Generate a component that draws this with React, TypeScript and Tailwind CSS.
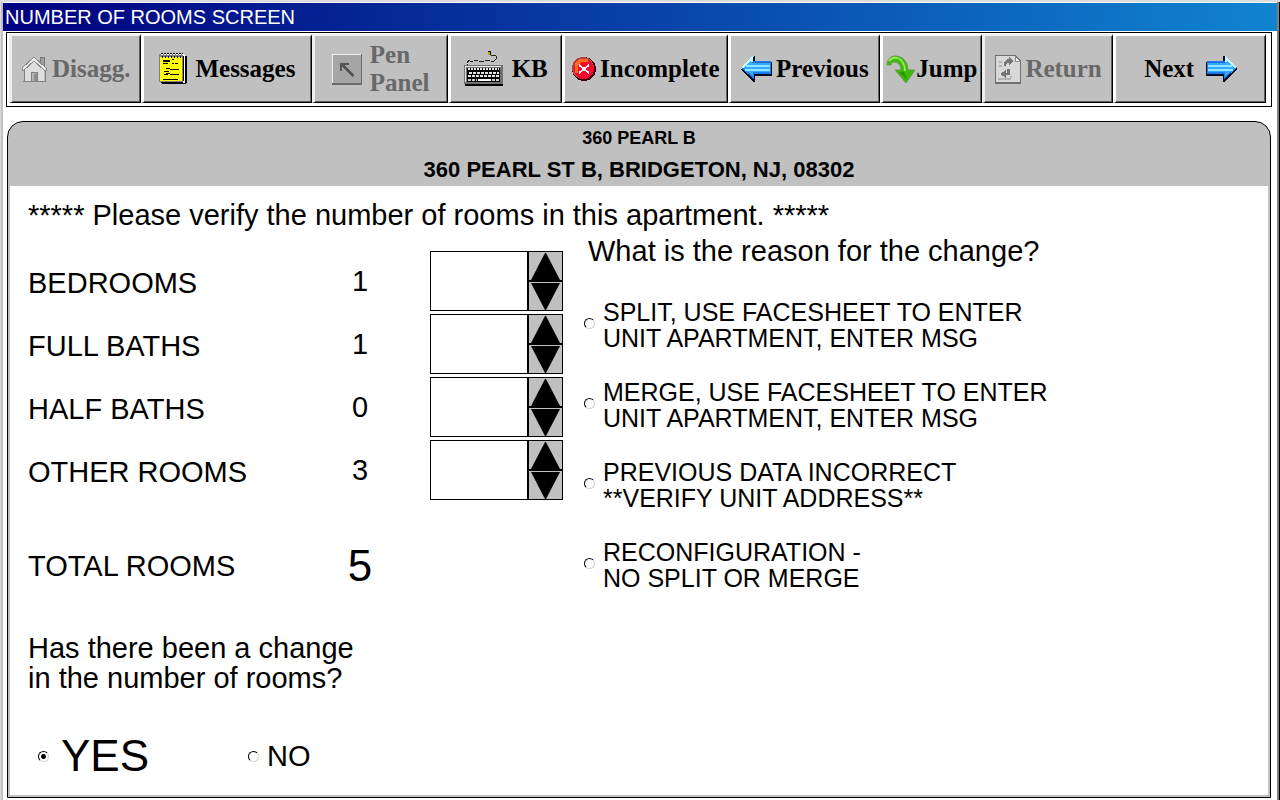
import { useState } from "react";
import type { ReactNode } from "react";

const rooms = [
  { id: "bedrooms", label: "BEDROOMS", count: 1 },
  { id: "full-baths", label: "FULL BATHS", count: 1 },
  { id: "half-baths", label: "HALF BATHS", count: 0 },
  { id: "other-rooms", label: "OTHER ROOMS", count: 3 },
];

const reasons = [
  { id: "split", lines: ["SPLIT, USE FACESHEET TO ENTER", "UNIT APARTMENT, ENTER MSG"] },
  { id: "merge", lines: ["MERGE, USE FACESHEET TO ENTER", "UNIT APARTMENT, ENTER MSG"] },
  { id: "incorrect", lines: ["PREVIOUS DATA INCORRECT", "**VERIFY UNIT ADDRESS**"] },
  { id: "reconfig", lines: ["RECONFIGURATION -", "NO SPLIT OR MERGE"] },
];

const HouseIcon = () => (
  <svg width="26" height="26" viewBox="0 0 26 26" shapeRendering="crispEdges" aria-hidden="true">
    <path d="M18 1h4v10h-4z" fill="#a0a0a0" stroke="#777" />
    <path d="M3 13L12 4l10 9v12H3z" fill="#dedede" />
    <path d="M2 14v11M1 25h23M23 14v11" stroke="#808080" strokeWidth="1" fill="none" />
    <path d="M0 14v-2L12 1l12 11v2h-2L12 5 2 14z" fill="#e8e8e8" stroke="#8a8a8a" />
    <path d="M9 16h6v9H9z" fill="#b4b4b4" stroke="#808080" />
    <path d="M12 18h3v7h-3z" fill="#8c8c8c" />
  </svg>
);

const NotepadIcon = () => (
  <svg width="28" height="32" viewBox="0 0 28 32" shapeRendering="crispEdges" aria-hidden="true">
    <path d="M3 3h25v26l-2 2H3z" fill="#000" />
    <path d="M2 2h24v28H2z" fill="#fff" />
    <path d="M24 3h1v25h-1zM2 29h22v1H2z" fill="#000" />
    <path d="M0 1h24v28H0z" fill="#808080" />
    <path d="M1 4h22v24H1z" fill="#ff0" />
    <path d="M2 1h23" stroke="#fff" strokeDasharray="2 1" />
    <path d="M3 3v2M6 3v2M9 3v2M12 3v2M15 3v2M18 3v2M21 3v2" stroke="#000" />
    <path d="M2 0h22" stroke="#000" strokeDasharray="2 1" />
    <path d="M4 7h7M4 8h7M13 6h2M4 10h5M13 10h2M16 10h3M7 15h4M11 16h9M5 18h5M7 20h4M11 21h9M5 21h4M4 26h15" stroke="#000" />
  </svg>
);

const PenIcon = () => (
  <svg width="30" height="31" viewBox="0 0 30 31" shapeRendering="crispEdges" aria-hidden="true">
    <path d="M0 0h30v31H0z" fill="#6c6c6c" />
    <path d="M0 0h29v29H0z" fill="#eee" />
    <path d="M1 1h28v28H1z" fill="#a6a6a6" />
    <path d="M8 9h9v2h-5l10 10-2 2-10-10v4H8z" fill="#555" />
  </svg>
);

const KeyboardIcon = () => (
  <svg width="40" height="36" viewBox="0 0 40 36" shapeRendering="crispEdges" aria-hidden="true">
    <path d="M3 14v-3l3-2M6 10h3M10 9h4M15 10h5M21 9h5M27 10h3l2-2V5l-5-1" fill="none" stroke="#222" />
    <path d="M3 15v-4" stroke="#fff" strokeDasharray="1 1" />
    <path d="M24 0h3v4h-3z" fill="#000" />
    <path d="M24 1h2v3h-2z" fill="#b5a900" />
    <path d="M1 15h38v20H1z" fill="#000" />
    <path d="M0 14h39v19H0z" fill="#707070" />
    <path d="M1 15h36v1H1zM1 16h1v15H1z" fill="#e8e8e8" />
    <path d="M3 17h33v14H3z" fill="#000" />
    <path d="M4 18h31" stroke="#e6e6e6" strokeWidth="2" strokeDasharray="2 1" />
    <path d="M5 22h30M4 25h31" stroke="#e6e6e6" strokeWidth="2" strokeDasharray="3 1" />
    <path d="M4 29h9M28 29h7" stroke="#ccc" strokeWidth="2" strokeDasharray="3 1" />
    <path d="M14 29h13" stroke="#fff" strokeWidth="2" />
  </svg>
);

const StopIcon = () => (
  <svg width="24" height="24" viewBox="0 0 24 24" shapeRendering="crispEdges" aria-hidden="true">
    <circle cx="12" cy="12" r="12" fill="#40000a" />
    <circle cx="11" cy="11" r="11" fill="#b8404a" />
    <circle cx="12" cy="12" r="10" fill="#f5082b" />
    <path d="M16 3H9L4 8v8" fill="none" stroke="#ff6a18" strokeWidth="3" />
    <path d="M7 8l10 8M17 8L7 16" stroke="#fff" strokeWidth="2" />
  </svg>
);

const ArrowIcon = ({ right = false }: { right?: boolean }) => (
  <svg width="31" height="28" viewBox="0 0 31 28" shapeRendering="crispEdges" aria-hidden="true">
    <g transform={right ? "translate(31 0) scale(-1 1)" : undefined}>
      <path d="M0 14L13 1h1v6h17v14H14v6h-2z" fill="#000a22" />
      <path d="M0 13L12 1v5h18v13H13v5z" fill="#1b7df0" />
      <path d="M2 13l9-9v4h18v9H12v4z" fill="#35aaff" />
      <path d="M5 11h24M4 15h25" stroke="#8fe6ff" strokeWidth="2" />
      <path d="M12 7h17" stroke="#2a63d8" />
      <path d="M1 13L11 3v4" fill="none" stroke="#c4f6ff" strokeWidth="2" />
    </g>
  </svg>
);

const JumpIcon = () => (
  <svg width="30" height="29" viewBox="0 0 30 29" aria-hidden="true">
    <path d="M1 10C1 4 5 1 9 1c8 0 13 6 13 14h7L20 28 9 15h6c0-5-3-8-7-8-2 0-3 1-3 3z" fill="#3db80b" stroke="#6a9a50" />
    <path d="M3 6c4-5 11-4 14 2 2 3 2 5 2 8" fill="none" stroke="#93ea55" strokeWidth="2" />
    <path d="M13 17h5l3 8z" fill="#289400" />
  </svg>
);

const ReturnIcon = () => (
  <svg width="26" height="29" viewBox="0 0 26 29" shapeRendering="crispEdges" aria-hidden="true">
    <path d="M0 0h20l6 6v23H0z" fill="#707070" />
    <path d="M1 1h19l5 5v21H1z" fill="#d8d8d8" />
    <path d="M20 1v5h5z" fill="#f4f4f4" stroke="#888" />
    <path d="M9 11V7l3-3h2V2l5 4-5 4V8h-2l-1 3zM15 14v6h-4v3l-6-4 6-4v3h1v-4z" fill="#757575" />
    <path d="M4 7h3M4 11h3M15 22h2M3 24h13" stroke="#b4b4b4" strokeWidth="2" />
  </svg>
);

const ToolButton = ({ className, disabled, children }: { className: string; disabled?: boolean; children: ReactNode }) => (
  <button
    type="button"
    disabled={disabled}
    className={`flex min-w-0 items-center justify-center border-t-2 border-r border-b border-l-3 border-t-white border-r-black border-b-black border-l-white bg-[#c0c0c0] whitespace-nowrap shadow-[inset_-1px_-1px_0_#606060] font-bold disabled:border-t-[#eeeeee] disabled:border-l-[#eeeeee] disabled:text-[#686868] ${className}`}
  >
    {children}
  </button>
);

const Radio = ({ id, name, checked, onChange }: { id: string; name: string; checked: boolean; onChange: () => void }) => (
  <input
    type="radio"
    id={id}
    name={name}
    checked={checked}
    onChange={onChange}
    className="size-[11px] shrink-0 appearance-none rounded-full border border-t-black border-r-gray-300 border-b-gray-300 border-l-black bg-white checked:bg-[radial-gradient(circle,#000_2px,#fff_3px)]"
  />
);

const RoomField = ({ id, label, count }: { id: string; label: string; count: number }) => {
  const [value, setValue] = useState("");
  const step = (by: number) => setValue(String(Math.max(0, Number(value) + by)));

  return (
    <div className="flex h-[60px] items-center">
      <label htmlFor={id} className="w-[302px] pt-1">{label}</label>
      <span className="w-[60px] text-center">{count}</span>
      <div className="ml-10 flex h-full w-[133px] border border-black">
        <input
          id={id}
          inputMode="numeric"
          value={value}
          onChange={(e) => setValue(e.target.value)}
          className="w-full min-w-0 flex-1 bg-white px-2 outline-none"
        />
        <div className="flex w-[35px] flex-col border-l-2 border-black bg-[#c0c0c0]">
          <button type="button" aria-label={`Increase ${label}`} onClick={() => step(1)} className="flex flex-1 items-center justify-center border-b border-black">
            <svg width="29" height="27" viewBox="0 0 29 27"><path d="M14 0h1l14 27H0z" /></svg>
          </button>
          <button type="button" aria-label={`Decrease ${label}`} onClick={() => step(-1)} className="flex flex-1 items-center justify-center border-t border-black">
            <svg width="29" height="27" viewBox="0 0 29 27"><path d="M0 0h29L15 27h-1z" /></svg>
          </button>
        </div>
      </div>
    </div>
  );
};

const App = () => {
  const [reason, setReason] = useState("");
  const [changed, setChanged] = useState("yes");
  const total = rooms.reduce((sum, room) => sum + room.count, 0);

  return (
    <div className="flex min-h-screen border-t-2 border-l border-[#dcdcdc] bg-white font-['Liberation_Sans',Arial,sans-serif] text-black">
      <div className="mr-px flex min-w-0 flex-1 flex-col border-r-2 border-l-2 border-r-[#808080] border-l-[#c0c0c0] pt-px shadow-[1px_0_0_#000]">
        <h1 className="h-7 bg-linear-to-r/srgb from-[#000080] to-[#1084d0] px-[2px] text-[20px] leading-7 text-white">NUMBER OF ROOMS SCREEN</h1>

        <nav className="mt-px mr-[5px] ml-[3px] flex h-[75px] border border-black pt-px pr-[5px] pb-[3px] pl-[2px] font-['Liberation_Serif','Times_New_Roman',serif] text-[25px]">
          <ToolButton className="flex-132 gap-1" disabled><HouseIcon />Disagg.</ToolButton>
          <ToolButton className="flex-171 gap-2" ><NotepadIcon />Messages</ToolButton>
          <ToolButton className="flex-136 gap-2 text-left leading-7" disabled><PenIcon /><span>Pen<br />Panel</span></ToolButton>
          <ToolButton className="flex-113 gap-2"><KeyboardIcon />KB</ToolButton>
          <ToolButton className="flex-167 gap-1"><StopIcon />Incomplete</ToolButton>
          <ToolButton className="flex-152 gap-1"><ArrowIcon />Previous</ToolButton>
          <ToolButton className="flex-101"><JumpIcon />Jump</ToolButton>
          <ToolButton className="flex-131 gap-1" disabled><ReturnIcon />Return</ToolButton>
          <ToolButton className="flex-153 gap-3">Next<ArrowIcon right /></ToolButton>
        </nav>

        <main className="mt-[14px] mr-[6px] mb-[2px] ml-1 flex flex-1 flex-col rounded-t-2xl border border-black bg-[#c0c0c0] px-[2px] pb-[2px]">
          <header className="h-16 pt-[2px] text-center font-bold">
            <p className="text-[18px] leading-7">360 PEARL B</p>
            <p className="text-[22px] leading-9">360 PEARL ST B, BRIDGETON, NJ, 08302</p>
          </header>

          <form className="flex-1 bg-white px-[18px] pt-[14px] text-[29px] leading-[30px]">
            <p>***** Please verify the number of rooms in this apartment. *****</p>

            <div className="mt-[6px] flex gap-[21px]">
              <div className="w-[535px] shrink-0 pt-[15px]">
                <div className="flex flex-col gap-[3px]">
                  {rooms.map((room) => <RoomField key={room.id} {...room} />)}
                </div>
                <div className="mt-9 flex h-[60px] items-center">
                  <span className="w-[302px]">TOTAL ROOMS</span>
                  <output className="w-[60px] text-center text-[44px]">{total}</output>
                </div>
              </div>

              <fieldset className="min-w-0 flex-1">
                <legend className="pl-1">What is the reason for the change?</legend>
                <div className="flex flex-col gap-6 pt-[29px]">
                  {reasons.map(({ id, lines }) => (
                    <div key={id} className="flex items-center gap-2">
                      <Radio id={id} name="reason" checked={reason === id} onChange={() => setReason(id)} />
                      <label htmlFor={id} className="pt-1 text-[25px] leading-[26px]">{lines[0]}<br />{lines[1]}</label>
                    </div>
                  ))}
                </div>
              </fieldset>
            </div>

            <fieldset className="mt-[37px]">
              <legend>Has there been a change<br />in the number of rooms?</legend>
              <div className="mt-[33px] flex h-[60px] items-center pl-[10px]">
                <div className="flex w-[210px] items-center gap-3">
                  <Radio id="changed-yes" name="changed" checked={changed === "yes"} onChange={() => setChanged("yes")} />
                  <label htmlFor="changed-yes" className="text-[44px]">YES</label>
                </div>
                <div className="flex items-center gap-2">
                  <Radio id="changed-no" name="changed" checked={changed === "no"} onChange={() => setChanged("no")} />
                  <label htmlFor="changed-no">NO</label>
                </div>
              </div>
            </fieldset>
          </form>
        </main>
      </div>
    </div>
  );
};
export default App;
